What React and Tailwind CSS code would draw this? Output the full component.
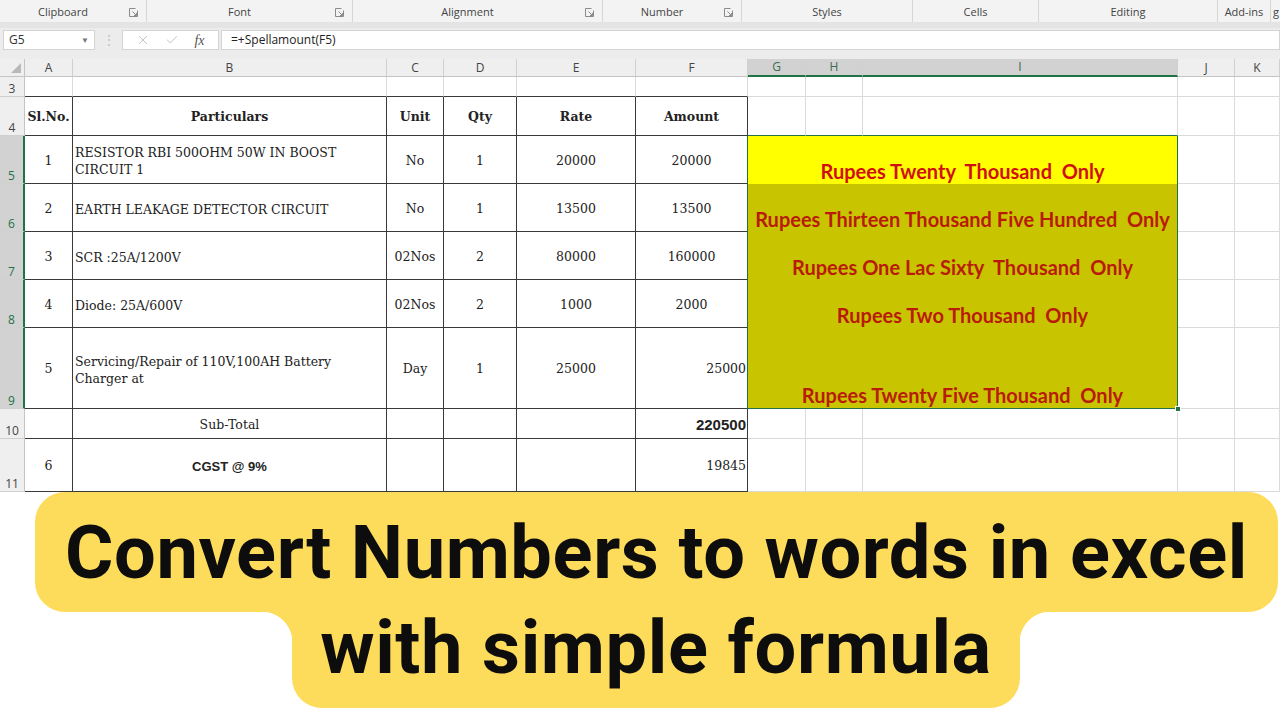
import { X, Check } from "lucide-react";

const BR = "border-r-[#3a3a3a]";
const BB = "border-b-[#3a3a3a]";
const GR = "border-r-[#dadada]";
const GB = "border-b-[#dadada]";
const XR = "border-r-[#217346]";
const XB = "border-b-[#217346]";

const Launcher = () => (
  <svg width="9" height="9" viewBox="0 0 9 9" className="absolute right-[8px] top-[8px]">
    <path d="M0.5 0.5h6M0.5 0.5v8h8v-6" stroke="#8a8a8a" fill="none" strokeWidth="1" />
    <path d="M3.5 3.5l4 4M5 7.5h2.5V5" stroke="#8a8a8a" fill="none" strokeWidth="1" />
  </svg>
);

const groups = [
  { label: "Clipboard", w: "w-[147px]", launcher: true },
  { label: "Font", w: "w-[206px]", launcher: true },
  { label: "Alignment", w: "w-[250px]", launcher: true },
  { label: "Number", w: "w-[139px]", launcher: true },
  { label: "Styles", w: "w-[171px]" },
  { label: "Cells", w: "w-[126px]" },
  { label: "Editing", w: "w-[179px]" },
  { label: "Add-ins", w: "w-[53px]" },
];

const items = [
  { sl: "1", p: ["RESISTOR RBI 500OHM 50W IN BOOST", "CIRCUIT 1"], unit: "No", qty: "1", rate: "20000", amt: "20000" },
  { sl: "2", p: ["EARTH LEAKAGE DETECTOR CIRCUIT"], unit: "No", qty: "1", rate: "13500", amt: "13500" },
  { sl: "3", p: ["SCR :25A/1200V"], unit: "02Nos", qty: "2", rate: "80000", amt: "160000" },
  { sl: "4", p: ["Diode: 25A/600V"], unit: "02Nos", qty: "2", rate: "1000", amt: "2000" },
  { sl: "5", p: ["Servicing/Repair of 110V,100AH Battery", "Charger at"], unit: "Day", qty: "1", rate: "25000", amt: "25000", right: true },
];

const words = [
  "Rupees Twenty  Thousand  Only",
  "Rupees Thirteen Thousand Five Hundred  Only",
  "Rupees One Lac Sixty  Thousand  Only",
  "Rupees Two Thousand  Only",
  "Rupees Twenty Five Thousand  Only",
];

function C({ children, r = GR, b = GB, className = "" }) {
  return (
    <div className={`flex items-center justify-center pt-[3px] border-r border-b text-[12.5px] text-[#222] ${r} ${b} ${className}`}>
      {children}
    </div>
  );
}

function RowHead({ n, sel }) {
  return (
    <div
      className={`flex items-end justify-center pb-[1px] text-[12px] leading-none font-['Open_Sans',sans-serif] border-b border-b-[#d0d0d0] ${
        sel ? "bg-[#d2d2d2] text-[#217346] border-r-2 border-r-[#217346]" : "bg-[#efefef] text-[#444] border-r border-r-[#c4c4c4]"
      }`}
    >
      {n}
    </div>
  );
}

export default function App() {
  const cols = ["A", "B", "C", "D", "E", "F", "G", "H", "I", "J", "K"];
  return (
    <div className="w-[1280px] h-[720px] bg-white overflow-hidden font-['DejaVu_Serif',serif]">
      {/* ribbon group labels */}
      <div className="h-[22px] bg-[#f3f3f3] flex font-['Open_Sans',sans-serif] text-[11px] text-[#444]">
        {groups.map((g) => (
          <div key={g.label} className={`${g.w} relative flex items-end justify-center pb-[2px] border-r border-r-[#d6d6d6] ${g.launcher ? "pr-[20px]" : ""}`}>
            {g.label}
            {g.launcher && <Launcher />}
          </div>
        ))}
        <div className="flex-1 flex items-end pb-[2px] pl-[2px]">g</div>
      </div>

      {/* formula bar */}
      <div className="h-[37px] bg-[#ececec] border-t-[6px] border-t-[#e4e4e4] pt-[2px] flex items-start font-['Open_Sans',sans-serif]">
        <div className="ml-[3px] w-[92px] h-[20px] bg-white border border-[#d4d4d4] flex items-center justify-between px-[5px] text-[12px] text-[#333]">
          <span>G5</span>
          <span className="text-[8px] text-[#777]">▼</span>
        </div>
        <div className="w-[27px] h-[20px] flex items-center justify-center text-[12px] text-[#bdbdbd]">⋮</div>
        <div className="w-[97px] h-[20px] bg-white border border-[#d4d4d4] flex items-center justify-around px-[6px] text-[#b0b0b0]">
          <X size={14} strokeWidth={1.3} />
          <Check size={14} strokeWidth={1.3} />
          <span className="font-['Liberation_Serif',serif] italic text-[14px] text-[#555]">fx</span>
        </div>
        <div className="ml-[2px] flex-1 h-[20px] bg-white border border-[#d4d4d4] flex items-center pl-[9px] text-[12px] text-[#222]">
          =+Spellamount(F5)
        </div>
      </div>

      {/* sheet */}
      <div className="h-[433px] overflow-hidden">
        <div className="grid grid-cols-[25px_48px_314px_57px_73px_119px_112px_58px_57px_315px_57px_45px] grid-rows-[18px_20px_39px_48px_48px_48px_48px_81px_30px_53px]">
          {/* column headers */}
          <div className="relative bg-[#efefef] border-r border-b border-r-[#c4c4c4] border-b-[#c4c4c4]">
            <div className="absolute right-[3px] bottom-[3px] w-0 h-0 border-l-[10px] border-l-transparent border-b-[10px] border-b-[#b9b9b9]" />
          </div>
          {cols.map((c) => {
            const sel = c === "G" || c === "H" || c === "I";
            return (
              <div
                key={c}
                className={`flex items-center justify-center text-[12px] font-['Open_Sans',sans-serif] border-r border-r-[#d0d0d0] ${
                  sel ? "bg-[#d2d2d2] text-[#3d6b50] border-b-2 border-b-[#217346]" : "bg-[#efefef] text-[#444] border-b border-b-[#c4c4c4]"
                }`}
              >
                {c}
              </div>
            );
          })}

          {/* row 3 */}
          <RowHead n="3" />
          {["A", "B", "C", "D", "E", "F"].map((c) => (
            <C key={c} b={BB} />
          ))}
          {["G", "H", "I", "J", "K"].map((c) => (
            <C key={c} />
          ))}

          {/* row 4 */}
          <RowHead n="4" />
          {["Sl.No.", "Particulars", "Unit", "Qty", "Rate", "Amount"].map((h) => (
            <C key={h} r={BR} b={BB} className="font-bold">
              {h}
            </C>
          ))}
          <C b={XB} />
          <C b={XB} />
          <C b={XB} />
          <C />
          <C />

          {/* rows 5-9 */}
          {items.map((it, i) => (
            <div key={it.sl} className="contents">
              <RowHead n={String(5 + i)} sel />
              <C r={BR} b={BB}>{it.sl}</C>
              <C r={BR} b={BB} className="justify-start pl-[2px] leading-[17px]">
                <div>
                  {it.p.map((l) => (
                    <div key={l}>{l}</div>
                  ))}
                </div>
              </C>
              <C r={BR} b={BB}>{it.unit}</C>
              <C r={BR} b={BB}>{it.qty}</C>
              <C r={BR} b={BB}>{it.rate}</C>
              <C r={XR} b={BB} className={it.right ? "justify-end pr-[1px]" : ""}>
                {it.amt}
              </C>
              {i === 0 && (
                <div className="col-span-3 row-span-5 relative border-r border-b border-r-[#217346] border-b-[#217346] flex flex-col font-['Lato',sans-serif] font-bold text-[20px] leading-[24px] whitespace-pre">
                  {words.map((w, k) => (
                    <div
                      key={k}
                      className={`flex items-end justify-center pb-[1px] ${k === 0 ? "bg-[#ffff00] text-[#d01010]" : "bg-[#c8c400] text-[#b81c08]"} ${
                        k === 4 ? "flex-1" : "h-[48px]"
                      }`}
                    >
                      {w}
                    </div>
                  ))}
                  <div className="absolute -right-[4px] -bottom-[4px] w-[6px] h-[6px] bg-[#217346] border border-white" />
                </div>
              )}
              <C />
              <C />
            </div>
          ))}

          {/* row 10 */}
          <RowHead n="10" />
          <C r={BR} b={BB} />
          <C r={BR} b={BB}>Sub-Total</C>
          <C r={BR} b={BB} />
          <C r={BR} b={BB} />
          <C r={BR} b={BB} />
          <C r={BR} b={BB} className="justify-end pr-[1px] font-['Liberation_Sans',sans-serif] font-bold text-[15px] text-[#111]">
            220500
          </C>
          <C />
          <C />
          <C />
          <C />
          <C />

          {/* row 11 */}
          <RowHead n="11" />
          <C r={BR} b={BB}>6</C>
          <C r={BR} b={BB} className="font-['Liberation_Sans',sans-serif] font-bold text-[13px] text-[#111]">
            CGST @ 9%
          </C>
          <C r={BR} b={BB} />
          <C r={BR} b={BB} />
          <C r={BR} b={BB} />
          <C r={BR} b={BB} className="justify-end pr-[1px]">
            19845
          </C>
          <C />
          <C />
          <C />
          <C />
          <C />
        </div>
      </div>

      {/* title banner */}
      <div className="font-['Roboto',sans-serif] font-bold text-[#0d0d0d] tracking-[0.6px]">
        <div className="ml-[35px] w-[1243px] h-[120px] rounded-[30px] bg-[#fddc5c] flex justify-center pt-[24px]">
          <div className="text-[74px] leading-none">Convert Numbers to words in excel</div>
        </div>
        <div className="relative ml-[292px] w-[728px] h-[96px] rounded-b-[30px] bg-[#fddc5c] flex justify-center">
          <div className="absolute -left-[30px] top-0 w-[30px] h-[30px] bg-[radial-gradient(circle_at_0_100%,transparent_30px,#fddc5c_30.5px)]" />
          <div className="absolute -right-[30px] top-0 w-[30px] h-[30px] bg-[radial-gradient(circle_at_100%_100%,transparent_30px,#fddc5c_30.5px)]" />
          <div className="text-[74px] leading-none -mt-[1px]">with simple formula</div>
        </div>
      </div>
    </div>
  );
}
